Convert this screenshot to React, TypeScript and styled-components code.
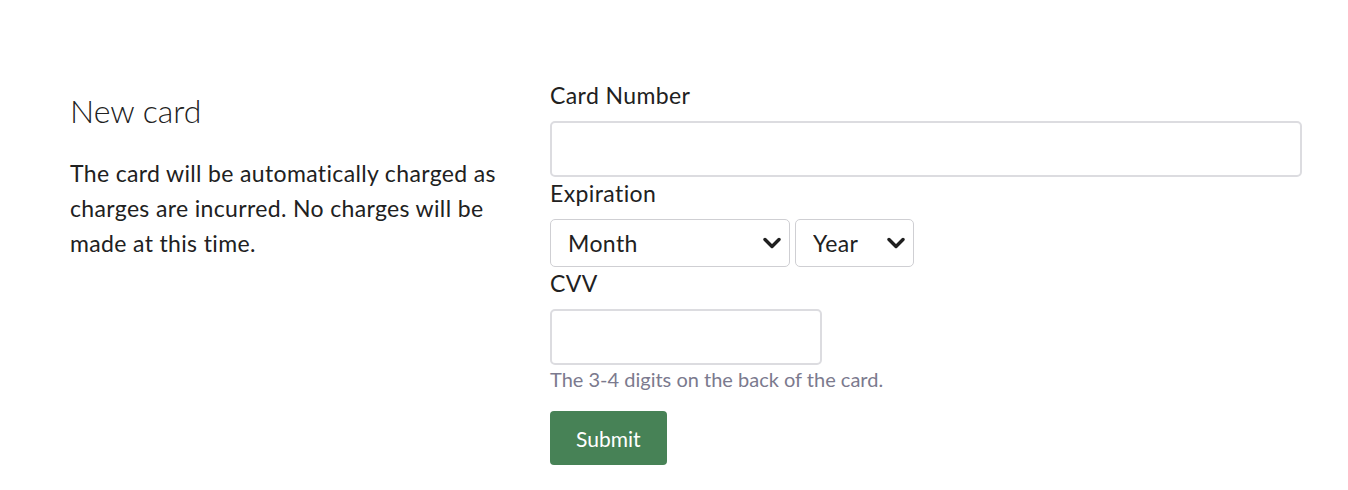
import React from 'react';
import styled, { createGlobalStyle } from 'styled-components';

const GlobalStyle = createGlobalStyle`
  html, body {
    margin: 0;
    padding: 0;
    background: #ffffff;
  }
  body {
    font-family: Lato, "Open Sans", "Liberation Sans", sans-serif;
    color: #212121;
  }
`;

const Page = styled.div`
  display: grid;
  grid-template-columns: 450px 1fr;
  column-gap: 30px;
  padding: 79px 46px 24px 70px;
`;

const Intro = styled.div`
  padding-top: 13px;
`;

const Heading = styled.h2`
  margin: 0 0 27px;
  font-size: 32px;
  line-height: 37px;
  font-weight: 300;
  color: #212121;
`;

const Lead = styled.p`
  margin: 0;
  font-size: 23px;
  line-height: 35px;
  letter-spacing: 0.35px;
  color: #212121;
`;

const Form = styled.form`
  display: flex;
  flex-direction: column;
  align-items: flex-start;
`;

const Label = styled.label`
  display: block;
  font-size: 23px;
  line-height: 33px;
  letter-spacing: 0.4px;
  margin-bottom: 9px;
  color: #212121;
`;

const TextInput = styled.input<{ $width?: number }>`
  box-sizing: border-box;
  width: ${(p) => (p.$width ? `${p.$width}px` : '100%')};
  height: 56px;
  border: 2px solid #dcdce0;
  border-radius: 5px;
  padding: 0 16px;
  font-family: inherit;
  font-size: 22px;
  background: #fff;
  outline: none;
`;

const SelectRow = styled.div`
  display: flex;
  gap: 5px;
`;

const SelectWrap = styled.div<{ $width: number }>`
  position: relative;
  width: ${(p) => p.$width}px;
  height: 48px;
`;

const Select = styled.select`
  appearance: none;
  -webkit-appearance: none;
  box-sizing: border-box;
  width: 100%;
  height: 100%;
  border: 1px solid #cfcfd3;
  border-radius: 5px;
  padding: 0 36px 0 17px;
  font-family: inherit;
  font-size: 23px;
  letter-spacing: 0.4px;
  color: #212121;
  background: #fff;
  outline: none;
`;

const Chevron = styled.svg`
  position: absolute;
  right: 9px;
  top: 17px;
  width: 18px;
  height: 14px;
  pointer-events: none;
`;

const Help = styled.div`
  font-size: 20px;
  line-height: 28px;
  color: #7b7a8e;
  margin-bottom: 18px;
`;

const SubmitButton = styled.button`
  height: 54px;
  padding: 0 26px;
  border: none;
  border-radius: 4px;
  background: #478256;
  color: #ffffff;
  font-family: inherit;
  font-size: 21px;
  cursor: pointer;
`;

const DropdownSelect: React.FC<{ width: number; placeholder: string }> = ({
  width,
  placeholder,
}) => (
  <SelectWrap $width={width}>
    <Select defaultValue="">
      <option value="">{placeholder}</option>
    </Select>
    <Chevron viewBox="0 0 18 14">
      <path
        d="M2 3.5 L9 10.5 L16 3.5"
        fill="none"
        stroke="#1f1f1f"
        strokeWidth="3.4"
        strokeLinecap="round"
        strokeLinejoin="round"
      />
    </Chevron>
  </SelectWrap>
);

export default function App() {
  return (
    <>
      <GlobalStyle />
      <Page>
        <Intro>
          <Heading>New card</Heading>
          <Lead>
            The card will be automatically charged as charges are incurred. No
            charges will be made at this time.
          </Lead>
        </Intro>
        <Form onSubmit={(e) => e.preventDefault()}>
          <Label htmlFor="card-number">Card Number</Label>
          <TextInput id="card-number" type="text" />
          <Label>Expiration</Label>
          <SelectRow>
            <DropdownSelect width={240} placeholder="Month" />
            <DropdownSelect width={119} placeholder="Year" />
          </SelectRow>
          <Label htmlFor="cvv">CVV</Label>
          <TextInput id="cvv" type="text" $width={272} />
          <Help>The 3-4 digits on the back of the card.</Help>
          <SubmitButton type="submit">Submit</SubmitButton>
        </Form>
      </Page>
    </>
  );
}
